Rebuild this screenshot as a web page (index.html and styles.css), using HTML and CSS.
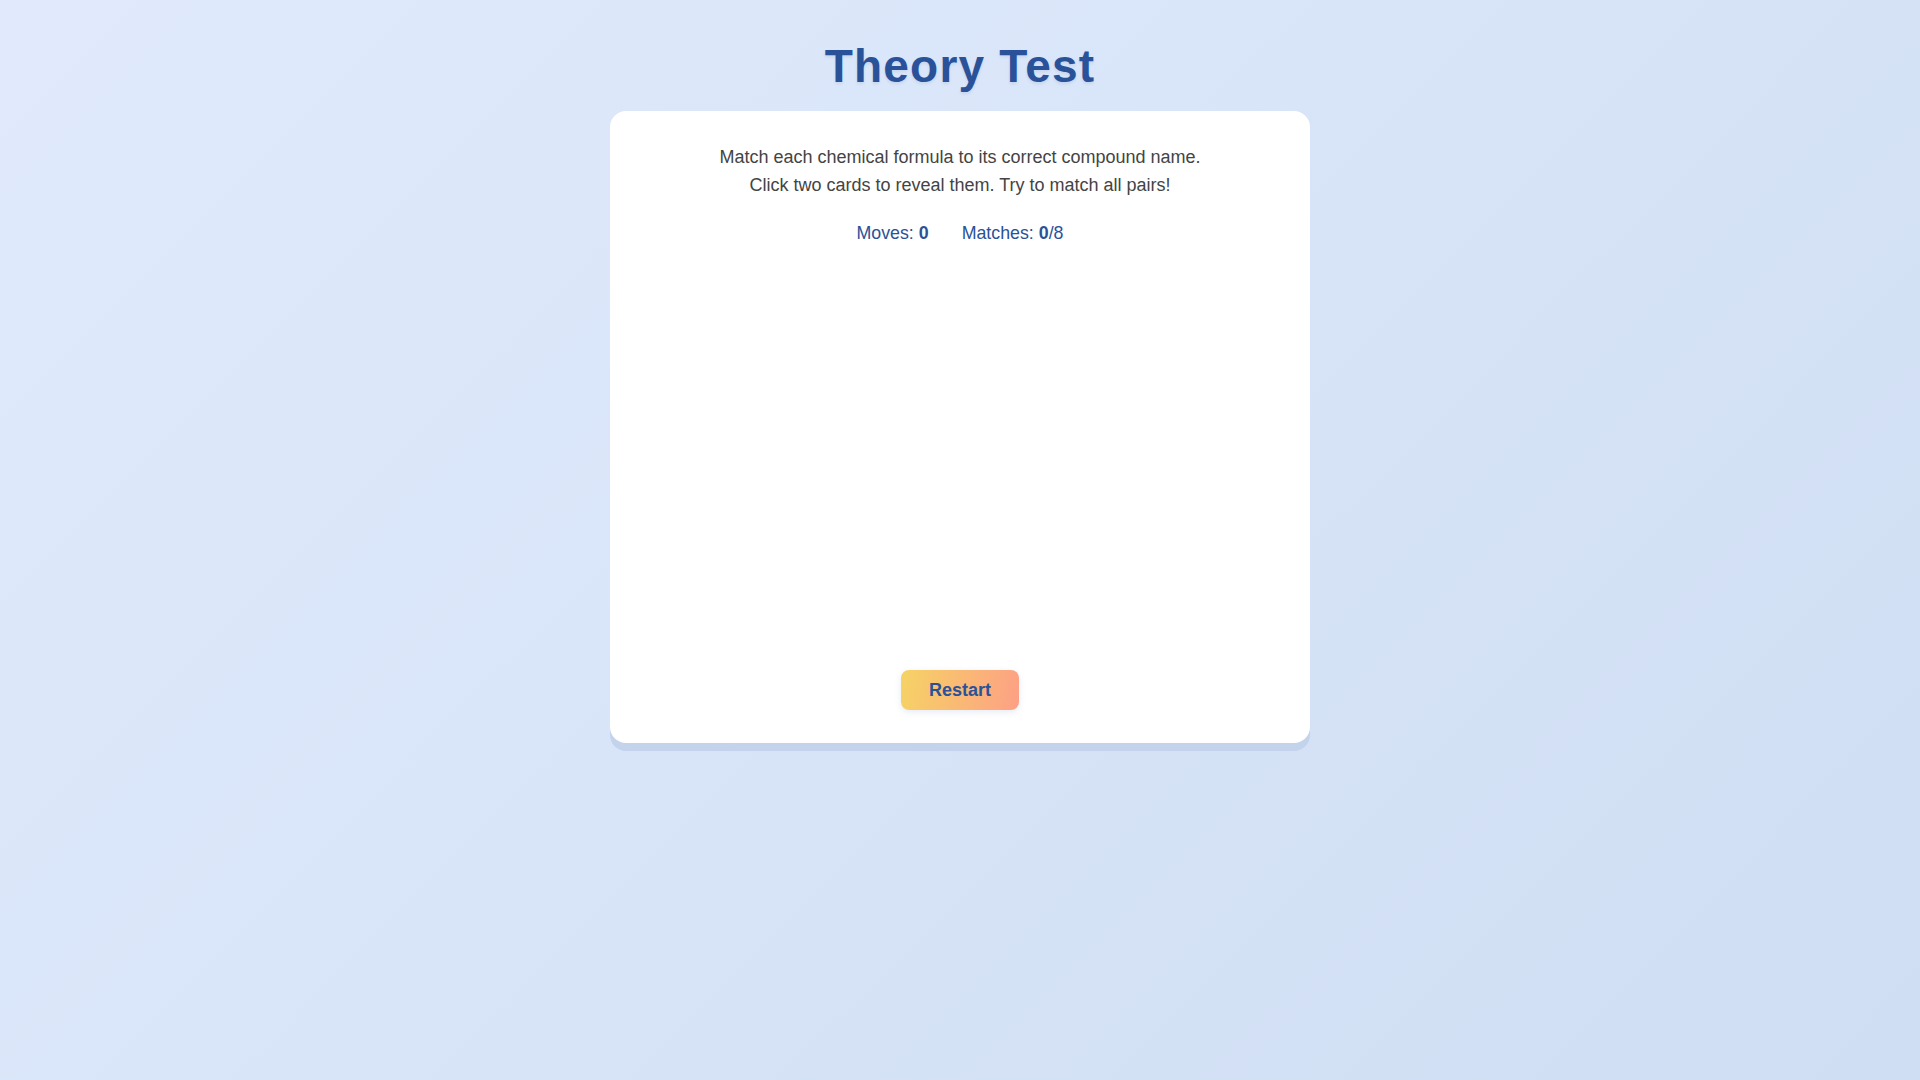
FILE: index.html
```html
<!DOCTYPE html>
<html lang="en">
<head>
<meta charset="utf-8">
<title>Theory Test</title>
<link rel="stylesheet" href="styles.css">
</head>
<body>
<main class="page">
  <h1 class="title">Theory Test</h1>
  <section class="panel">
    <p class="intro">Match each chemical formula to its correct compound name.<br>Click two cards to reveal them. Try to match all pairs!</p>
    <div class="stats">
      <span class="stat">Moves: <b>0</b></span>
      <span class="stat">Matches: <b>0</b>/8</span>
    </div>
    <div class="board"></div>
    <div class="actions">
      <button class="restart" type="button">Restart</button>
    </div>
  </section>
</main>
</body>
</html>
```

FILE: styles.css
```css
html, body {
  margin: 0;
  padding: 0;
}
body {
  min-height: 100vh;
  background: linear-gradient(135deg, #e0eafc 0%, #cfdef3 100%);
  font-family: "Liberation Sans", Arial, sans-serif;
}
.page {
  display: flex;
  flex-direction: column;
  align-items: center;
  padding-top: 40px;
}
.title {
  margin: 0 0 18px;
  font-size: 46px;
  line-height: 53px;
  font-weight: 700;
  letter-spacing: 1.2px;
  color: #2a5298;
  text-shadow: 0 2px 3px rgba(42, 82, 152, 0.1);
}
.panel {
  box-sizing: border-box;
  width: 700px;
  height: 632px;
  padding: 32px 40px 33px;
  background: #fff;
  border-radius: 16px;
  box-shadow: 0 8px 0 #c3d3ec;
  display: flex;
  flex-direction: column;
  align-items: center;
}
.intro {
  margin: 0;
  font-size: 18px;
  line-height: 28px;
  color: #444;
  text-align: center;
}
.stats {
  margin-top: 20px;
  display: flex;
  gap: 33px;
  font-size: 17.8px;
  line-height: 28px;
  color: #2a5298;
}
.stat b {
  font-weight: 700;
}
.board {
  flex: 1;
  width: 100%;
}
.actions {
  display: flex;
  justify-content: center;
}
.restart {
  height: 40px;
  padding: 0 28px;
  border: none;
  border-radius: 8px;
  background: linear-gradient(100deg, #f6d365 0%, #fda085 100%);
  color: #2a5298;
  font-family: "Liberation Sans", Arial, sans-serif;
  font-size: 18px;
  font-weight: 700;
  box-shadow: 0 2px 6px rgba(42, 82, 152, 0.12);
  cursor: pointer;
}
```
